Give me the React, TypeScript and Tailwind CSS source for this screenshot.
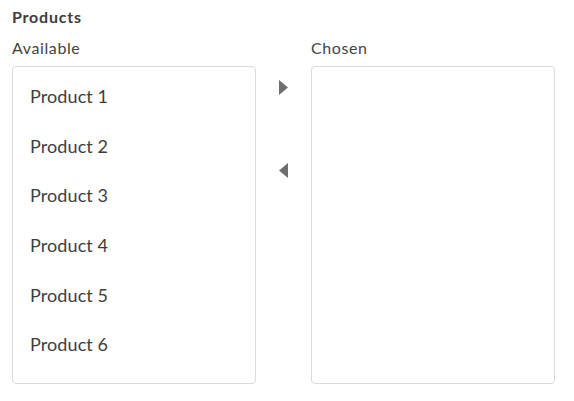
import React from "react";

const products = ["Product 1", "Product 2", "Product 3", "Product 4", "Product 5", "Product 6"];

const ListBox: React.FC<{ items: string[] }> = ({ items }) => (
  <div className="h-[318px] w-[244px] rounded-[4px] border border-[#dddbda] bg-white pt-[5px]">
    {items.map((p) => (
      <div
        key={p}
        className="flex h-[49.6px] items-center px-[17px] text-[18px] leading-[27px] tracking-[0.1px] text-[#3e3e3c]"
      >
        {p}
      </div>
    ))}
  </div>
);

export default function App() {
  return (
    <div className="min-h-screen bg-white px-3 pt-[5px] font-['Lato',sans-serif]">
      <div className="text-[16px] leading-6 font-bold tracking-[0.8px] text-[#3e3e3c]">Products</div>
      <div className="mt-[7px] flex">
        <div>
          <div className="mb-[6px] text-[16px] leading-6 tracking-[0.6px] text-[#444444]">Available</div>
          <ListBox items={products} />
        </div>
        <div className="flex w-[55px] flex-col items-center pt-[44px]">
          <button className="flex h-[15px] w-[10px] items-center justify-center">
            <svg width="9" height="15" viewBox="0 0 9 15">
              <path d="M0 0 L9 7.5 L0 15 Z" fill="#706e6b" />
            </svg>
          </button>
          <button className="mt-[68px] flex h-[15px] w-[10px] items-center justify-center">
            <svg width="9" height="15" viewBox="0 0 9 15">
              <path d="M9 0 L0 7.5 L9 15 Z" fill="#706e6b" />
            </svg>
          </button>
        </div>
        <div>
          <div className="mb-[6px] text-[16px] leading-6 tracking-[0.6px] text-[#444444]">Chosen</div>
          <ListBox items={[]} />
        </div>
      </div>
    </div>
  );
}
